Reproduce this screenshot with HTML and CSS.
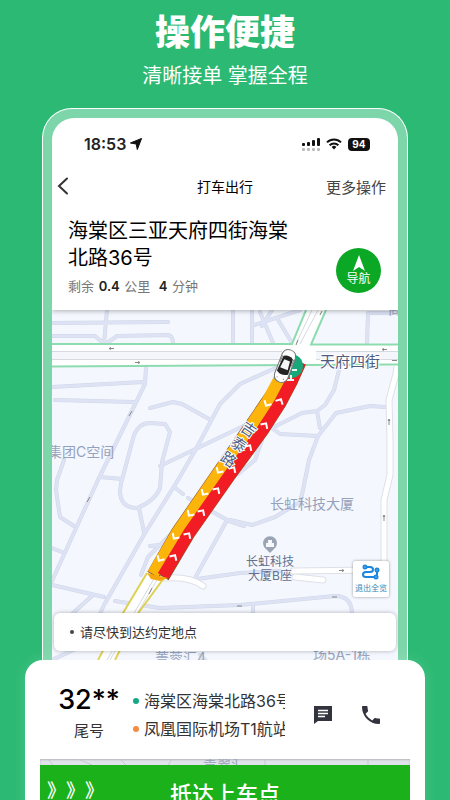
FILE: index.html
```html
<!DOCTYPE html>
<html lang="zh-CN">
<head>
    <meta charset="UTF-8" />
    <meta name="viewport" content="width=device-width, initial-scale=1" />
    <title>打车出行</title>
    <link rel="stylesheet" href="styles.css">
</head>
<body>

<header class="hero">
    <h1>操作便捷</h1>
    <p>清晰接单 掌握全程</p>
</header>

<main class="phone">
    <div class="screen">
        <div class="status-bar">
            <span class="time">18:53</span>
            <svg class="location" width="12" height="12" viewBox="0 0 12 12"><path d="M11.6.4 7.3 11.6 6.2 6 .4 5z" fill="#111" stroke="#111" stroke-linejoin="round" /></svg>
            <svg class="signal" width="18" height="13" viewBox="0 0 18 13">
                <g fill="#111"><rect y="5" width="3" height="3" rx="1" /><rect x="5" y="4" width="3" height="4" rx="1" /><rect x="10" y="2" width="3" height="6" rx="1" /><rect x="15" width="3" height="8" rx="1" /></g>
                <g fill="#bbb"><rect y="10" width="3" height="3" rx="1" /><rect x="5" y="10" width="3" height="3" rx="1" /><rect x="10" y="10" width="3" height="3" rx="1" /><rect x="15" y="10" width="3" height="3" rx="1" /></g>
            </svg>
            <svg class="wifi" width="16" height="12" viewBox="0 0 16 12">
                <path d="M1 4.4a10 10 0 0 1 14 0M3.6 7.2a6.3 6.3 0 0 1 8.8 0" fill="none" stroke="#111" stroke-width="2" />
                <path d="M5.6 9a3.4 3.4 0 0 1 4.8 0L8 11.6z" fill="#111" />
            </svg>
            <span class="battery">94</span>
        </div>

        <nav class="nav-bar">
            <button class="back" type="button" aria-label="返回">
                <svg width="12" height="18" viewBox="0 0 12 18"><path d="M10 1.500 2 9 10 16.500" fill="none" stroke="#333" stroke-width="2" stroke-linecap="round" /></svg>
            </button>
            <h2>打车出行</h2>
            <button class="more" type="button">更多操作</button>
        </nav>

        <section class="destination">
            <div class="address">
                <h3>海棠区三亚天府四街海棠北路36号</h3>
                <p>剩余 <b>0.4</b> 公里 &nbsp;<b>4</b> 分钟</p>
            </div>
            <button class="navigate" type="button">
                <svg width="14" height="16" viewBox="0 0 14 16"><path d="M7 0 13 16 7 12 1 16z" fill="#fff" /></svg>
                导航
            </button>
        </section>

        <section class="map">
            <svg class="map-canvas" viewBox="52 310 346 360" preserveAspectRatio="xMidYMin slice">
                <defs>
                    <g id="streets">
                        <path d="M52 323 168 322M107 310 104 343M52 336H95L103 343M107 343 117 336 168 335Q173 336 173 343M233 310V343" />
                        <path d="M146 367 145 384 98 480 52 581M52 387 143 382M55 400 134 402" />
                        <path d="M150 408 173 402 182 404 209 419M280 366 240 384 220 404 196 449 178 480 145 533 104 605 99 616" />
                        <path d="M122 480 134 435Q139 423 150 423L165 424 170 432 162 462 160 488Q155 501 137 508 120 508 120 490L122 478M160 466 256 420" />
                        <path d="M100 477 122 479M64 460 57 480 56 490 60 517 74 526M52 548 62 552M52 585 104 597M72 614 93 595M139 508 144 532" />
                        <path d="M174 487 183 494M188 498 229 521 244 526M226 522 195 578M141 575 148 557 170 535M150 546 160 545M190 580 240 573 280 571" />
                        <path d="M115 601 160 608 240 605 335 596Q352 596 352 614M253 606V614" />
                        <path d="M252 310V343M254 325 300 310M260 312 273 343M277 318 292 343M262 326 272 310M367 344 368 313H398" />
                        <path d="M340 366 334 390 325 405 317 411 302 413 272 428 280 434 318 436M317 411 320 428M385 407 370 406 336 413 318 436 309 460 303 490 300 502 275 517 252 525 230 520" />
                        <path d="M262 440 255 460 238 474M52 660 95 640M200 655 215 670" />
                    </g>
                    <g id="lanes">
                        <path d="M397 366 396 374 389 400 390 440V475L384 500V570M293 571 376 570M295 577 323 580M165 578Q190 576 203 586" />
                    </g>
                    <path id="chevron" d="M-4 2 0-2 4 2" />
                </defs>
                <rect x="52" y="310" width="346" height="360" fill="#f4f8fe" />
                <use href="#streets" class="street-edge" />
                <use href="#streets" class="street-fill" />
                <use href="#lanes" class="lane-edge" />
                <use href="#lanes" class="lane-fill" />

                <!-- main roads -->
                <path d="M306 310H326L306 355H288z" fill="#fff" />
                <rect x="52" y="344" width="346" height="22" fill="#fff" />
                <rect x="52" y="352" width="232" height="7" fill="#f4f6fb" />
                <rect x="316" y="352" width="82" height="7" fill="#f4f6fb" />
                <path d="M52 351.500H282M52 359.500H282M316 351.500H398M316 359.500H398M312 310 296 344M318 310 300 344" stroke="#d5d9e2" fill="none" />
                <path d="M52 344 292 344 306 310M326 310 311 344.500 398 344.500M52 366.500 398 364.500" stroke="#8ddcb0" stroke-width="2" fill="none" />
                <path d="M147 573 123 613 98 660H115L139 612 164 578z" fill="#fff" />
                <path d="M155 577 107 660M158 578 110 660" stroke="#d5d9e2" fill="none" />
                <path d="M147 573 123 613 98 660M164 578 139 612 115 660" stroke="#dfd052" stroke-width="2" fill="none" />
                <path class="direction" d="M109 348.500h5m-5 0 2-1m-2 1 2 1M140 362.500h-5m5 0-2-1m2 1-2 1M382 349.500h5m-5 0 2-1m-2 1 2 1M397 360.500h-5M389 419v6m0-6-1 2m1-2 1 2M384 515v6m0-6-1 2m1-2 1 2M344 570.500h-5m5 0-2-1m2 1-2 1M237 606h5M332 597h5M129 416l3-5M87 502l3-5M149 594l3-6M296 345l2-5M320 315l2-4" />

                <!-- route -->
                <path d="M285 376 267 402 246 433 217 475 177 533 153 575" class="route-edge" />
                <path d="M300 362 291 382 280 403 262 431 229 476 189 533 163 577" class="route-edge" />
                <path d="M281 376 267 402 246 433 217 475 177 533 153 574" class="route-slow" />
                <path d="M300 362 291 382 280 403 262 431 229 476 189 533 163 576" class="route-jam" />
                <path d="M147 573 151 579 160 581 168 578 155 575z" fill="#f7a60b" />
                <g class="chevrons">
                    <use href="#chevron" transform="translate(280 401) rotate(28)" />
                    <use href="#chevron" transform="translate(265 425) rotate(34)" />
                    <use href="#chevron" transform="translate(249 447) rotate(34)" />
                    <use href="#chevron" transform="translate(233 469) rotate(34)" />
                    <use href="#chevron" transform="translate(217 490) rotate(34)" />
                    <use href="#chevron" transform="translate(202 512) rotate(34)" />
                    <use href="#chevron" transform="translate(188 535) rotate(34)" />
                    <use href="#chevron" transform="translate(174 557) rotate(32)" />
                    <use href="#chevron" transform="translate(267 404) rotate(210)" />
                    <use href="#chevron" transform="translate(251 427) rotate(214)" />
                    <use href="#chevron" transform="translate(219 471) rotate(214)" />
                    <use href="#chevron" transform="translate(204 493) rotate(214)" />
                    <use href="#chevron" transform="translate(190 514) rotate(214)" />
                    <use href="#chevron" transform="translate(175 537) rotate(214)" />
                    <use href="#chevron" transform="translate(160 559) rotate(210)" />
                </g>

                <circle cx="291" cy="366" r="12" fill="#16a878" />
                <path d="M292 370h5M287 380h7M291 375v6" stroke="#e6fff4" stroke-width="2" fill="none" />
                <g transform="translate(285 366) rotate(21)">
                    <path d="M-7-11Q-6-17 0-17T7-11V11Q6 17 0 17T-7 11z" fill="#fff" stroke="#777" />
                    <path d="M-5-9Q0-12 5-9L6 7Q0 11-6 7z" fill="#242424" />
                    <path d="M-3-6H3L4 3H-4z" fill="#f6f6f6" />
                    <path d="M-6-9V-2M6-9V-2M-4 13H-3M3 13H4" stroke="#888" fill="none" />
                </g>

                <g class="road-name vertical" transform="translate(239 444) rotate(34)">
                    <text y="-12">吉</text>
                    <text y="6">泰</text>
                    <text y="24">路</text>
                </g>
                <text class="road-name" x="320" y="367">天府四街</text>
                <g class="place">
                    <text x="48" y="457">集团C空间</text>
                    <text x="270" y="509">长虹科技大厦</text>
                    <text x="155" y="663">菁蓉汇4</text>
                    <text x="313" y="660">场5A-1栋</text>
                    <text x="388" y="314">商</text>
                </g>
                <path d="M270 553 266 549A7 7 0 1 1 274 549z" fill="#9ba4b5" />
                <path d="M266 547V543H268V540H272V543H274V547z" fill="#f5f7fb" />
                <g class="building">
                    <text x="270" y="566">长虹科技</text>
                    <text x="270" y="580">大厦B座</text>
                </g>
            </svg>

            <button class="overview" type="button">
                <svg width="18" height="16" viewBox="0 0 18 16"><g fill="none" stroke="#1a86e0" stroke-width="2"><circle cx="3" cy="3" r="1.500" /><path d="M5 3H8Q11 3 11 5.500T8 8H4Q1 8 1 10.500T4 13H12M15 8V11" /><circle cx="15" cy="6" r="1.500" /><circle cx="14" cy="13" r="1.500" /></g></svg>
                退出全览
            </button>
            <p class="tip">请尽快到达约定地点</p>
        </section>
    </div>
</main>

<section class="sheet">
    <div class="order">
        <div class="tail">
            <strong>32**</strong>
            <span>尾号</span>
        </div>
        <ul class="stops">
            <li class="from">海棠区海棠北路36号</li>
            <li class="to">凤凰国际机场T1航站楼</li>
        </ul>
        <button class="contact" type="button" aria-label="消息">
            <svg width="20" height="20" viewBox="0 0 20 20"><path d="M1 1H19V16H5L1 19z" fill="#33333d" /><path d="M5 5.500H15M5 8.500H15M5 11.500H12" stroke="#fff" stroke-width="1.500" /></svg>
        </button>
        <button class="contact" type="button" aria-label="电话">
            <svg width="18" height="18" viewBox="0 0 18 18"><path d="M3.600 7.800c1.400 2.800 3.800 5.200 6.600 6.600l2.200-2.200c.3-.3.700-.4 1-.2 1.100.4 2.300.6 3.600.6.600 0 1 .4 1 1V17c0 .6-.4 1-1 1C7.600 18 0 10.400 0 1c0-.6.400-1 1-1h3.500c.6 0 1 .4 1 1 0 1.200.2 2.500.6 3.600.1.300 0 .7-.2 1z" fill="#33333d" /></svg>
        </button>
    </div>
    <div class="map-strip">
        <svg width="100%" height="6" viewBox="40 759 370 6" preserveAspectRatio="xMidYMid slice">
            <path d="M48 759 53 765M78 759 92 765M120 759 126 765M172 759 168 765M265 759V765M368 759V765" stroke="#c3c7d2" fill="none" />
            <text class="place" x="203" y="769">青翠汇</text>
        </svg>
    </div>
    <button class="arrive" type="button">
        <span class="arrows">》》》</span>
        抵达上车点
    </button>
</section>

</body>
</html>
```

FILE: styles.css
```css
* {
    box-sizing: border-box;
}
body {
    height: 100vh;
    margin: 0;
    overflow: hidden;
    background-color: #2bb973;
    font-family: Inter, "Noto Sans CJK SC", sans-serif;
    color: #222;
}
h1, h2, h3, p, ul {
    margin: 0;
    padding: 0;
}
button {
    padding: 0;
    border: none;
    background: none;
    font-family: inherit;
    color: inherit;
    cursor: pointer;
}
svg {
    display: block;
}
.hero {
    padding-top: 11px;
    color: white;
    text-align: center;
}
.hero h1 {
    font-size: 35px;
    font-weight: 900;
    line-height: 42px;
}
.hero p {
    margin-top: 8px;
    font-size: 20px;
    line-height: 30px;
}
.phone {
    margin: 17px 42px 0;
    padding: 9px 9px 0;
    border: 1px solid white;
    border-bottom: none;
    border-radius: 30px 30px 0 0;
    background-color: #7dd6aa;
}
.screen {
    overflow: hidden;
    border-radius: 22px 22px 0 0;
    background-color: white;
}
.status-bar {
    display: flex;
    align-items: center;
    height: 52px;
    padding: 0 28px 0 32px;
}
.time {
    font-size: 16px;
    font-weight: 600;
}
.location {
    margin-left: 4px;
}
.signal {
    margin-left: auto;
}
.wifi {
    margin: 0 6px;
}
.battery {
    width: 22px;
    border-radius: 4px;
    background-color: #111;
    font-size: 10px;
    font-weight: 700;
    line-height: 13px;
    color: white;
    text-align: center;
}
.nav-bar {
    display: grid;
    grid-template-columns: 1fr auto 1fr;
    align-items: center;
    height: 32px;
    padding: 0 12px;
}
.nav-bar h2 {
    font-size: 14px;
    font-weight: 400;
    color: #000;
}
.back {
    justify-self: start;
    margin-left: -7px;
}
.more {
    justify-self: end;
    font-size: 15px;
    color: #444;
}
.destination {
    position: relative;
    display: flex;
    align-items: flex-end;
    justify-content: space-between;
    height: 108px;
    padding: 0 17px 14px 16px;
    background-color: white;
    box-shadow: 0 1px 5px rgba(0, 0, 0, 0.3);
    clip-path: inset(0 0 -8px);
    z-index: 1;
}
.address {
    width: 224px;
}
.address h3 {
    font-size: 20px;
    font-weight: 400;
    line-height: 27px;
    color: #000;
}
.address p {
    margin-top: 4px;
    font-size: 13px;
    line-height: 20px;
    color: #777;
}
.address b {
    margin: 0 1px;
    font-weight: 600;
    color: #222;
}
.navigate {
    display: flex;
    flex-direction: column;
    align-items: center;
    justify-content: center;
    width: 45px;
    height: 45px;
    margin-bottom: 3px;
    border-radius: 50%;
    background-color: #0ba825;
    font-size: 12px;
    line-height: 16px;
    color: white;
}
.map {
    position: relative;
    height: 360px;
    overflow: hidden;
}
.map-canvas {
    width: 100%;
    height: 100%;
}
.street-edge, .street-fill, .lane-edge, .lane-fill {
    fill: none;
    stroke-linecap: round;
    stroke-linejoin: round;
}
.street-edge {
    stroke: #d0d6e6;
    stroke-width: 4px;
}
.street-fill {
    stroke: #dde3f5;
    stroke-width: 3px;
}
.lane-edge {
    stroke: #dde0e7;
    stroke-width: 7px;
}
.lane-fill {
    stroke: #fff;
    stroke-width: 5px;
}
.direction {
    fill: none;
    stroke: #888;
}
.route-edge, .route-slow, .route-jam {
    fill: none;
    stroke-linejoin: round;
}
.route-edge {
    stroke: #8c5426;
    stroke-width: 13px;
}
.route-slow {
    stroke: #fdb50b;
    stroke-width: 12px;
}
.route-jam {
    stroke: #f21d24;
    stroke-width: 12px;
}
.chevrons {
    fill: none;
    stroke: white;
    stroke-width: 2px;
}
.road-name {
    font-size: 15px;
    fill: #4f5d83;
    stroke: white;
    stroke-width: 2px;
    paint-order: stroke;
}
.vertical {
    text-anchor: middle;
}
.place {
    font-size: 14px;
    fill: #96a1bb;
}
.building {
    font-size: 12px;
    fill: #65718f;
    text-anchor: middle;
}
.overview {
    position: absolute;
    right: 9px;
    bottom: 73px;
    display: flex;
    flex-direction: column;
    align-items: center;
    justify-content: center;
    gap: 2px;
    width: 36px;
    height: 36px;
    border-radius: 2px;
    background-color: white;
    box-shadow: 0 0 3px rgba(0, 0, 0, 0.4);
    font-size: 8px;
    line-height: 12px;
    color: #3289b5;
    white-space: nowrap;
}
.tip {
    position: absolute;
    left: 2px;
    right: 2px;
    bottom: 19px;
    padding-left: 26px;
    border-radius: 6px;
    background-color: white;
    box-shadow: 0 0 4px rgba(0, 0, 0, 0.3);
    font-size: 13px;
    line-height: 38px;
    color: #333;
}
.tip::before {
    content: "";
    position: absolute;
    top: 17px;
    left: 16px;
    width: 4px;
    height: 4px;
    border-radius: 50%;
    background-color: #444;
}
.sheet {
    position: relative;
    margin: -10px 25px 0;
    padding: 0 15px;
    border-radius: 18px 18px 0 0;
    background-color: white;
    box-shadow: 0 0 16px rgba(255, 255, 255, 0.15);
}
.order {
    display: flex;
    align-items: center;
    height: 99px;
    padding: 10px 30px 0 18px;
}
.tail {
    display: flex;
    flex-direction: column;
    align-items: center;
    width: 62px;
}
.tail strong {
    font-size: 27px;
    font-weight: 500;
    line-height: 32px;
    color: #000;
}
.tail span {
    font-size: 15px;
    line-height: 30px;
    color: #333;
}
.stops {
    flex: 1;
    min-width: 0;
    margin: 0 28px 0 13px;
    list-style: none;
}
.stops li {
    display: flex;
    align-items: center;
    gap: 5px;
    overflow: hidden;
    font-size: 16px;
    line-height: 28px;
    color: #333;
    white-space: nowrap;
}
.stops li::before {
    content: "";
    flex: none;
    width: 6px;
    height: 6px;
    border-radius: 50%;
}
.stops .from::before {
    background-color: #14a982;
}
.stops .to::before {
    background-color: #f58a42;
}
.contact + .contact {
    margin-left: 29px;
}
.map-strip {
    height: 6px;
    overflow: hidden;
    background-color: #e1e3ea;
    box-shadow: inset 0 1px 2px rgba(0, 0, 0, 0.2);
}
.arrive {
    position: relative;
    display: block;
    width: 100%;
    height: 54px;
    background-color: #1bb11b;
    font-size: 22px;
    font-weight: 500;
    color: white;
}
.arrows {
    position: absolute;
    left: 7px;
    font-size: 19px;
    text-spacing-trim: space-all;
}
```
